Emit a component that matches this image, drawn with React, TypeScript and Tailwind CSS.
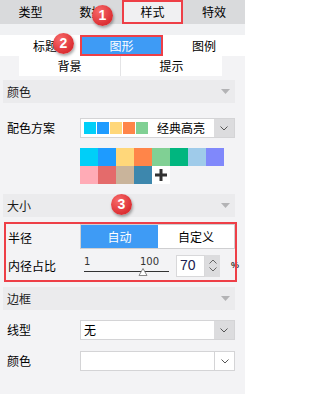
import React from "react";

const font = { fontFamily: '"Noto Sans CJK SC", "Liberation Sans", sans-serif' };

function Chevron({ color = "#555" }: { color?: string }) {
  return (
    <svg width="8" height="5" viewBox="0 0 8 5">
      <polyline points="0.5,0.5 4,4 7.5,0.5" fill="none" stroke={color} strokeWidth="1" />
    </svg>
  );
}

function Tri() {
  return (
    <svg width="9" height="5" viewBox="0 0 9 5">
      <polygon points="0,0 9,0 4.5,5" fill="#b3b3b5" />
    </svg>
  );
}

function Header({ title }: { title: string }) {
  return (
    <div className="mx-[3px] w-[232px] h-[23px] bg-[#ebebed] flex items-center justify-between pl-[4px] pr-[5px] text-[12px] text-[#1a1a1a]">
      <span>{title}</span>
      <Tri />
    </div>
  );
}

function Badge({ n, cls }: { n: string; cls: string }) {
  return (
    <div
      className={`absolute w-[21px] h-[21px] rounded-full bg-[radial-gradient(circle_at_35%_30%,#f86a6a,#dc2f33_70%)] text-white text-[14px] font-bold flex items-center justify-center shadow-[1px_2px_3px_rgba(0,0,0,0.35)] ${cls}`}
      style={{ fontFamily: '"Liberation Sans", Arial, sans-serif' }}
    >
      {n}
    </div>
  );
}

const palette1 = ["#00cff8", "#1e9bff", "#ffd77a", "#ff8549", "#80d094", "#00b67f", "#9fcbea", "#8088fb"];
const palette2 = ["#ffabb6", "#e46b6b", "#c9b49b", "#3d87ad"];

export default function App() {
  return (
    <div className="relative w-[245px] h-[394px] bg-[#f3f3f5] overflow-hidden text-black" style={font}>
      {/* top tabs */}
      <div className="flex h-[24px] bg-[#d9dadc] text-[12px]">
        <div className="w-[61px] flex items-center justify-center">类型</div>
        <div className="w-[61px] flex items-center justify-center">数据</div>
        <div className="w-[61px] flex items-center justify-center bg-[#f0f0f2] border-2 border-[#ee3f47]">样式</div>
        <div className="flex-1 flex items-center justify-center">特效</div>
      </div>
      <div className="h-[11px] bg-[#f0f1f3]" />
      {/* sub tabs */}
      <div className="flex h-[21px] text-[12px]">
        <div className="w-[80px] bg-white flex items-center justify-center pl-[10px]">标题</div>
        <div className="w-[83px] bg-[#3e9bf5] text-white border-2 border-[#ee3f47] flex items-center justify-center">图形</div>
        <div className="flex-1 bg-white flex items-center justify-center">图例</div>
      </div>
      <div className="ml-[19px] w-[203px] h-[20px] flex text-[12px]">
        <div className="flex-1 bg-white flex items-center justify-center">背景</div>
        <div className="w-px bg-[#e4e4e6]" />
        <div className="flex-1 bg-white flex items-center justify-center">提示</div>
      </div>

      <div className="h-[4px]" />
      <Header title="颜色" />

      {/* 配色方案 */}
      <div className="mt-[15px] flex items-center text-[12px]">
        <div className="w-[80px] pl-[7px]">配色方案</div>
        <div className="w-[155px] h-[20px] bg-white border border-[#d4d4d6] flex items-center">
          <div className="flex gap-px pl-[3px]">
            {palette1.slice(0, 5).map((c) => (
              <div key={c} className="w-[12px] h-[12px]" style={{ background: c }} />
            ))}
          </div>
          <div className="flex-1 text-center text-[12px]">经典高亮</div>
          <div className="w-[20px] h-full bg-[#dcdcde] flex items-center justify-center">
            <Chevron />
          </div>
        </div>
      </div>

      {/* palette */}
      <div className="mt-[10px] ml-[80px] flex flex-col">
        <div className="flex">
          {palette1.map((c) => (
            <div key={c} className="w-[18px] h-[18px]" style={{ background: c }} />
          ))}
        </div>
        <div className="flex">
          {palette2.map((c) => (
            <div key={c} className="w-[18px] h-[18px]" style={{ background: c }} />
          ))}
          <div className="w-[18px] h-[18px] bg-white flex items-center justify-center">
            <svg width="12" height="12" viewBox="0 0 12 12">
              <rect x="4.5" y="0" width="3" height="12" fill="#333" />
              <rect x="0" y="4.5" width="12" height="3" fill="#333" />
            </svg>
          </div>
        </div>
      </div>

      <div className="h-[10px]" />
      <Header title="大小" />

      {/* 大小 content */}
      <div className="relative mt-[6px] text-[12px]">
        <div className="flex items-center h-[26px] pt-px">
          <div className="w-[80px] pl-[8px] pt-[3px]">半径</div>
          <div className="w-[155px] h-[25px] border border-[#cfcfd1] flex">
            <div className="w-[77px] bg-[#3e9bf5] text-white flex items-center justify-center">自动</div>
            <div className="flex-1 bg-white flex items-center justify-center">自定义</div>
          </div>
        </div>
        <div className="flex items-center h-[33px]">
          <div className="w-[80px] pl-[8px]">内径占比</div>
          <div className="w-[96px] pl-[4px] flex flex-col pt-[2px]">
            <div className="flex justify-between w-[85px] text-[10px] leading-[10px] text-[#333] pr-[10px]" style={{ fontFamily: '"DejaVu Sans", sans-serif' }}>
              <span>1</span>
              <span>100</span>
            </div>
            <svg width="86" height="10" viewBox="0 0 86 10" className="mt-[-1px]">
              <line x1="0" y1="5.5" x2="85" y2="5.5" stroke="#333" strokeWidth="1" />
              <polygon points="59,2.5 55,9.5 63,9.5" fill="#fff" stroke="#888" strokeWidth="1" />
            </svg>
          </div>
          <div className="flex h-[22px]">
            <div className="w-[29px] bg-white border border-[#d8d8da] flex items-center pl-[3px] text-[14px] text-[#202050]" style={{ fontFamily: '"Liberation Sans", Arial, sans-serif' }}>
              70
            </div>
            <div className="w-[15px] bg-[#dcdcde] flex flex-col items-center justify-center gap-[3px]">
              <svg width="8" height="5" viewBox="0 0 8 5">
                <polyline points="0.5,4.5 4,1 7.5,4.5" fill="none" stroke="#666" strokeWidth="1" />
              </svg>
              <Chevron color="#666" />
            </div>
          </div>
          <div className="ml-[11px] text-[9px] font-bold text-[#333]" style={{ fontFamily: '"Liberation Sans", Arial, sans-serif' }}>%</div>
        </div>
        <div className="absolute left-[4px] top-[-1px] w-[233px] h-[60px] border-2 border-[#ee3f47] pointer-events-none" />
      </div>

      <div className="h-[5px]" />
      <Header title="边框" />

      <div className="mt-[10px] flex items-center text-[12px]">
        <div className="w-[80px] pl-[7px]">线型</div>
        <div className="w-[155px] h-[20px] bg-white border border-[#d4d4d6] flex items-center">
          <div className="flex-1 pl-[3px]">无</div>
          <div className="w-[20px] h-full bg-[#dcdcde] flex items-center justify-center">
            <Chevron />
          </div>
        </div>
      </div>

      <div className="mt-[11px] flex items-center text-[12px]">
        <div className="w-[80px] pl-[7px]">颜色</div>
        <div className="w-[155px] h-[20px] bg-white border border-[#d4d4d6] flex items-center">
          <div className="flex-1" />
          <div className="w-[20px] h-full border-l border-[#d4d4d6] flex items-center justify-center">
            <Chevron />
          </div>
        </div>
      </div>

      <Badge n="1" cls="left-[92px] top-[5px]" />
      <Badge n="2" cls="left-[53px] top-[33px]" />
      <Badge n="3" cls="left-[111px] top-[194px]" />
    </div>
  );
}
